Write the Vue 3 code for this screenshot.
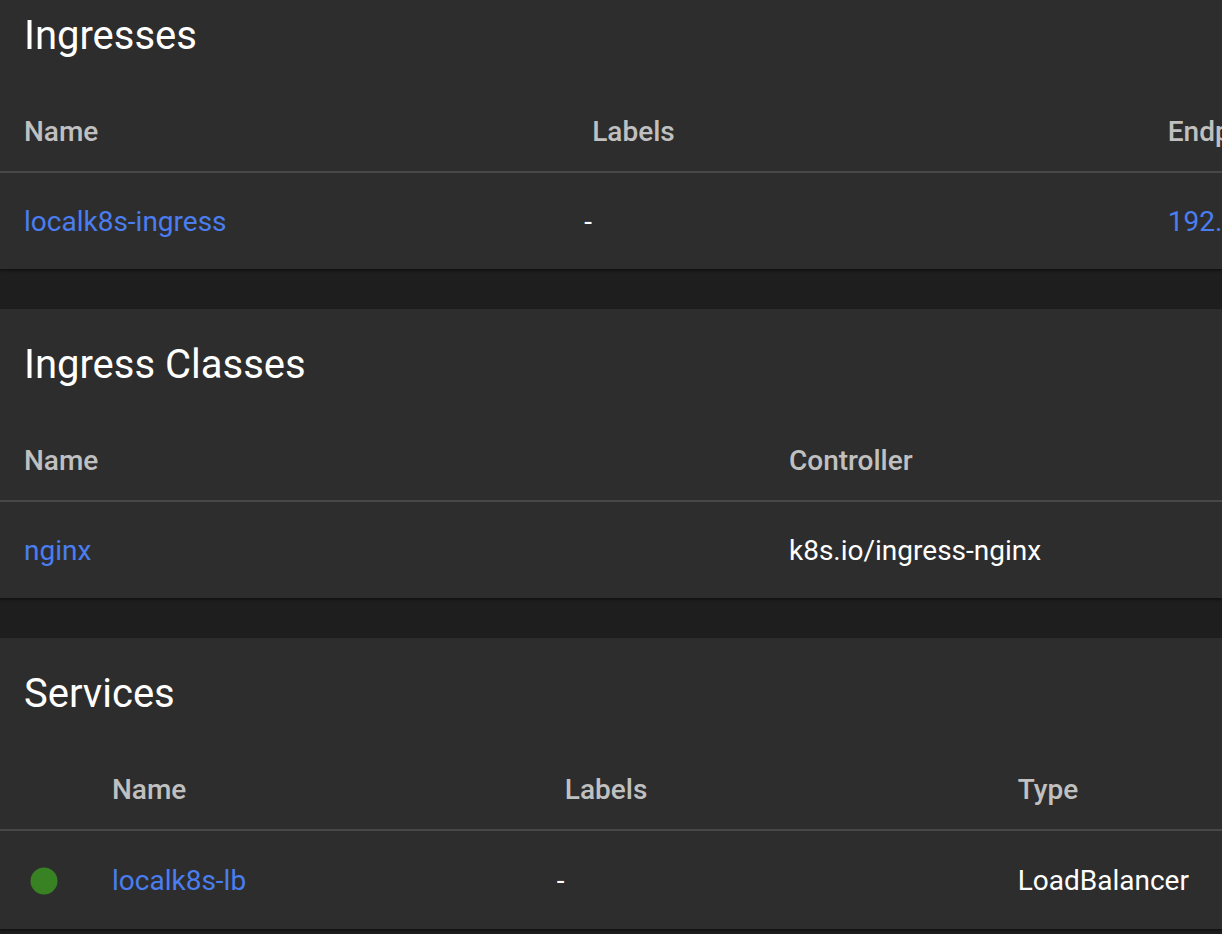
<script setup>
const sections = [
  {
    title: 'Ingresses',
    kind: 'ingresses',
    columns: ['Name', 'Labels', 'Endpoints'],
    cells: [
      { text: 'localk8s-ingress', link: true },
      { text: '-', empty: true },
      { text: '192.168.1.240', link: true },
    ],
  },
  {
    title: 'Ingress Classes',
    kind: 'classes',
    columns: ['Name', 'Controller'],
    cells: [{ text: 'nginx', link: true }, { text: 'k8s.io/ingress-nginx' }],
  },
  {
    title: 'Services',
    kind: 'services',
    status: true,
    columns: ['Name', 'Labels', 'Type'],
    cells: [
      { text: 'localk8s-lb', link: true },
      { text: '-', empty: true },
      { text: 'LoadBalancer' },
    ],
  },
]
</script>

<template>
  <main class="page">
    <section v-for="s in sections" :key="s.kind" class="card">
      <h2 class="title">{{ s.title }}</h2>
      <table class="table" :class="s.kind">
        <thead>
          <tr>
            <th v-if="s.status" class="status"></th>
            <th v-for="c in s.columns" :key="c" scope="col">{{ c }}</th>
          </tr>
        </thead>
        <tbody>
          <tr>
            <td v-if="s.status" class="status">
              <svg class="dot" viewBox="0 0 28 28" aria-hidden="true">
                <circle cx="14" cy="14" r="13.5" />
              </svg>
            </td>
            <td v-for="c in s.cells" :key="c.text" :class="{ empty: c.empty }">
              <a v-if="c.link" href="#">{{ c.text }}</a>
              <template v-else>{{ c.text }}</template>
            </td>
          </tr>
        </tbody>
      </table>
    </section>
  </main>
</template>

<style>
html,
body {
  background: #1e1e1e;
  overflow: hidden;
}
</style>

<style scoped>
.page {
  display: flex;
  flex-direction: column;
  gap: 40px;
  overflow: hidden;
  padding-bottom: 8px;
  font-family: Roboto, "Liberation Sans", sans-serif;
  color: #fff;
}
.card {
  background: #2d2d2d;
  box-shadow: 0 2px 2px #131313;
}
.title {
  margin: 0;
  padding: 32px 24px 0;
  font-size: 40px;
  font-weight: 400;
  line-height: 48px;
}
.card:first-child .title {
  padding-top: 12px;
}
.table {
  width: 100%;
  margin-top: 31px;
  table-layout: fixed;
  border-collapse: collapse;
  font-size: 28px;
}
th,
td {
  padding: 2px 0 0;
  text-align: left;
  white-space: nowrap;
  line-height: 32px;
}
th {
  height: 78px;
  color: #c0c0c0;
  font-weight: 500;
  border-bottom: 2px solid #484848;
}
td {
  height: 94px;
}
.services td {
  height: 96px;
}
th:first-child,
td:first-child {
  padding-left: 24px;
}
a {
  color: #4a7ef0;
  text-decoration: none;
}
td.empty {
  text-indent: -8px;
}
.ingresses th:nth-child(1) {
  width: 46.5%;
}
.ingresses th:nth-child(2) {
  width: 47.1%;
}
.classes th:nth-child(1) {
  width: 62.6%;
}
.services th:nth-child(1) {
  width: 88px;
}
.services th:nth-child(2),
.services th:nth-child(3) {
  width: 37.06%;
}
.dot {
  display: block;
  width: 28px;
  height: 28px;
  margin-left: 6px;
  fill: #388224;
}
</style>
